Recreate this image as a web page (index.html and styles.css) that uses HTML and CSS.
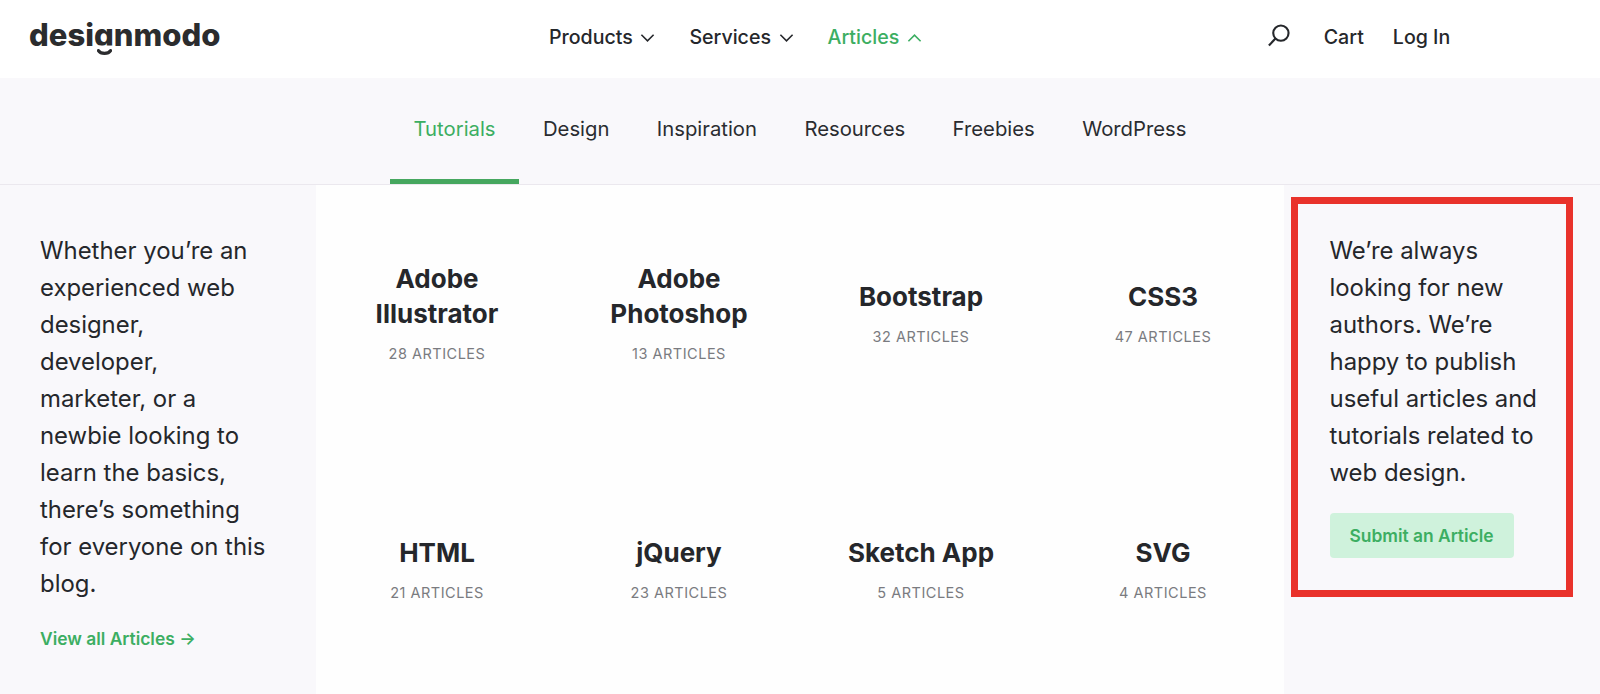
FILE: index.html
```html
<!DOCTYPE html>
<html lang="en">
<head>
<meta charset="utf-8">
<title>Designmodo</title>
<link rel="stylesheet" href="styles.css">
</head>
<body>
<div class="page">
  <header class="header">
    <a class="logo">desi<span class="logo-g"><span class="logo-g-text">g</span><svg class="smile" viewBox="0 0 16 7"><path d="M1.5 1.5C4 5.5 12 5.5 14.5 1.5"/></svg></span>nmodo</a>
    <nav class="nav">
      <a class="nav-item">Products <svg class="chev" viewBox="0 0 16 10"><path d="M1.5 1.5 8 8l6.5-6.5"/></svg></a>
      <a class="nav-item">Services <svg class="chev" viewBox="0 0 16 10"><path d="M1.5 1.5 8 8l6.5-6.5"/></svg></a>
      <a class="nav-item active">Articles <svg class="chev" viewBox="0 0 16 10"><path d="M1.5 8.5 8 2l6.5 6.5"/></svg></a>
    </nav>
    <div class="tools">
      <svg class="search" viewBox="0 0 24 24"><circle cx="14.5" cy="9.5" r="8"/><path d="M8.8 15.2 2 22.5"/></svg>
      <a class="tool cart">Cart</a>
      <a class="tool">Log In</a>
    </div>
  </header>
  <nav class="subnav">
    <a class="sub active">Tutorials</a>
    <a class="sub">Design</a>
    <a class="sub">Inspiration</a>
    <a class="sub">Resources</a>
    <a class="sub">Freebies</a>
    <a class="sub">WordPress</a>
  </nav>
  <main class="content">
    <aside class="side side-left">
      <p class="copy">Whether you’re an experienced web designer, developer, marketer, or a newbie looking to learn the basics, there’s something for everyone on this blog.</p>
      <a class="more">View all Articles →</a>
    </aside>
    <section class="grid">
      <a class="card"><h3>Adobe Illustrator</h3><span>28 Articles</span></a>
      <a class="card"><h3>Adobe Photoshop</h3><span>13 Articles</span></a>
      <a class="card"><h3>Bootstrap</h3><span>32 Articles</span></a>
      <a class="card"><h3>CSS3</h3><span>47 Articles</span></a>
      <a class="card"><h3>HTML</h3><span>21 Articles</span></a>
      <a class="card"><h3>jQuery</h3><span>23 Articles</span></a>
      <a class="card"><h3>Sketch App</h3><span>5 Articles</span></a>
      <a class="card"><h3>SVG</h3><span>4 Articles</span></a>
    </section>
    <aside class="side side-right">
      <p class="copy">We’re always looking for new authors. We’re happy to publish useful articles and tutorials related to web design.</p>
      <a class="button">Submit an Article</a>
      <div class="highlight"></div>
    </aside>
  </main>
</div>
</body>
</html>
```
FILE: styles.css
```css
* { box-sizing: border-box; }
html, body { margin: 0; padding: 0; background: #fff; }
body { font-family: Inter, "Liberation Sans", sans-serif; color: #25272b; }
p, h3 { margin: 0; }
.page { height: 694px; overflow: hidden; display: flex; flex-direction: column; }

.header { height: 78px; flex: none; display: flex; align-items: center; padding-left: 29px; padding-bottom: 5px; }
.logo { font-weight: 800; font-size: 31px; letter-spacing: 0; color: #2b2c2e; line-height: 1; width: 520px; display: flex; margin-bottom: 5px; }
.logo-g { position: relative; display: block; }
.logo-g-text { display: block; clip-path: inset(0 0 4px 0); }
.smile { position: absolute; left: 3px; top: 30px; width: 15px; height: 7px; fill: none; stroke: #2b2c2e; stroke-width: 3.4; stroke-linecap: round; }
.nav { display: flex; gap: 34px; }
.nav-item { display: flex; align-items: center; gap: 7.5px; font-size: 19.6px; font-weight: 500; }
.nav-item.active { color: #3cae62; }
.chev { width: 15px; height: 10px; fill: none; stroke: currentColor; stroke-width: 1.7; margin-top: 2px; }
.tools { display: flex; align-items: center; margin-left: 345px; }
.search { width: 23px; height: 23px; fill: none; stroke: #25272b; stroke-width: 2.2; margin-right: 34px; margin-top: -2px; }
.tool { font-size: 19.6px; font-weight: 500; }
.cart { margin-right: 29px; }

.subnav { height: 107px; flex: none; display: flex; justify-content: center; background: #f9f8fb; border-bottom: 1px solid #ebe8ee; }
.sub { display: flex; align-items: center; padding: 0 23.7px; font-size: 20.3px; border-bottom: 5px solid transparent; height: 106px; color: #2a2c30; }
.sub.active { color: #3cae62; border-bottom-color: #46a75f; }

.content { flex: 1; display: flex; min-height: 0; background: #f9f8fb; }
.side { width: 316px; flex: none; padding-top: 47px; }
.side-left { padding-left: 40px; padding-right: 50px; }
.side-right { padding-left: 45.5px; padding-right: 40px; position: relative; }
.copy { font-size: 23.9px; line-height: 37px; }
.more { display: block; margin-top: 26px; font-size: 17.4px; font-weight: 600; color: #3cae62; }
.button { display: flex; align-items: center; justify-content: center; width: 184px; height: 45px; margin-top: 22px; border-radius: 4px; background: #cff2dc; color: #3cae62; font-size: 17.4px; font-weight: 600; }
.highlight { position: absolute; left: 7px; top: 12px; width: 282px; height: 400px; border: 7px solid #e9322b; pointer-events: none; }

.grid { flex: 1; min-width: 0; display: grid; grid-template-columns: repeat(4, 242px); grid-auto-rows: 256px; background: #fefefe; overflow: hidden; }
.card { display: flex; flex-direction: column; align-items: center; justify-content: center; text-align: center; padding: 0 30px 3px; }
.card h3 { font-size: 26px; line-height: 35px; font-weight: 700; color: #25272b; }
.card span { margin-top: 14px; font-size: 14.5px; line-height: 17px; letter-spacing: 0.5px; text-transform: uppercase; color: #7a7b80; }
```
